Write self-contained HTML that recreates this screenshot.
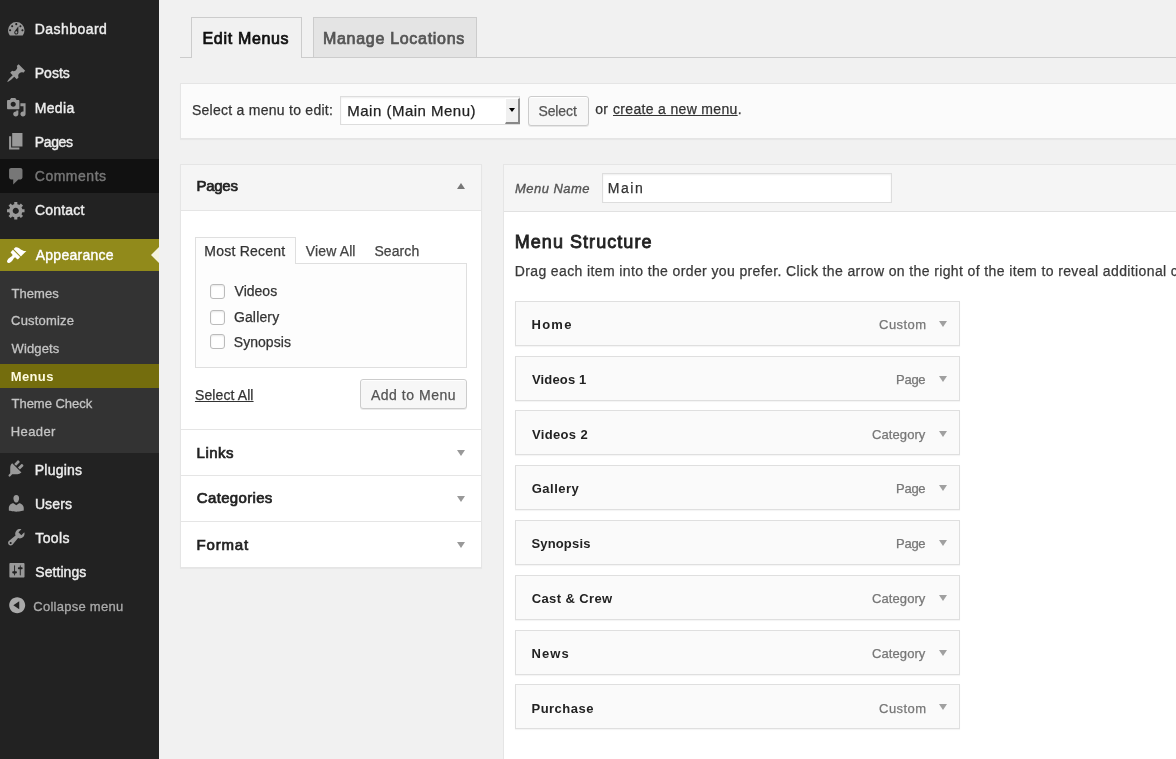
<!DOCTYPE html>
<html lang="en"><head><meta charset="utf-8"><title>Menus</title><style>
html,body{margin:0;padding:0}
body{width:1176px;height:759px;overflow:hidden;background:#f1f1f1;font-family:"Liberation Sans",sans-serif}
#w{position:absolute;left:0;top:0;width:1176px;height:759px;overflow:hidden;will-change:transform}
.b{position:absolute}
.t{position:absolute;white-space:nowrap;line-height:20px;height:20px;display:block}
svg.i{position:absolute;overflow:visible}
</style></head><body><div id="w">
<nav id="adminmenu">
<div class="b " style="left:0px;top:0px;width:159px;height:759px;background:#222"></div>
<div class="b " style="left:0px;top:159px;width:159px;height:34px;background:#111"></div>
<div class="b " style="left:0px;top:239px;width:159px;height:32px;background:#918a1b"></div>
<div class="b " style="left:0px;top:271px;width:159px;height:182px;background:#333"></div>
<div class="b " style="left:0px;top:364px;width:159px;height:24px;background:#746d0d"></div>
<div class="b" style="left:151px;top:247px;width:0;height:0;border-top:8px solid transparent;border-bottom:8px solid transparent;border-right:8px solid #f4f2e0"></div>
<span class="t" style="left:34.77px;top:19.0px;font-size:14px;color:#eee;letter-spacing:0.456px;-webkit-text-stroke:0.4px #eee;">Dashboard</span>
<span class="t" style="left:34.77px;top:63.0px;font-size:14px;color:#eee;letter-spacing:-0.001px;-webkit-text-stroke:0.4px #eee;">Posts</span>
<span class="t" style="left:34.77px;top:98.0px;font-size:14px;color:#eee;letter-spacing:0.318px;-webkit-text-stroke:0.4px #eee;">Media</span>
<span class="t" style="left:34.79px;top:132.0px;font-size:14px;color:#eee;letter-spacing:-0.381px;-webkit-text-stroke:0.4px #eee;">Pages</span>
<span class="t" style="left:34.79px;top:166.0px;font-size:14px;color:#777;letter-spacing:0.511px;-webkit-text-stroke:0.4px #777;">Comments</span>
<span class="t" style="left:34.99px;top:200.0px;font-size:14px;color:#eee;letter-spacing:0.202px;-webkit-text-stroke:0.4px #eee;">Contact</span>
<span class="t" style="left:35.68px;top:245.0px;font-size:14px;color:#fff;letter-spacing:0.268px;-webkit-text-stroke:0.4px #fff;">Appearance</span>
<span class="t" style="left:34.77px;top:460.0px;font-size:14px;color:#eee;letter-spacing:0.216px;-webkit-text-stroke:0.4px #eee;">Plugins</span>
<span class="t" style="left:34.89px;top:494.0px;font-size:14px;color:#eee;letter-spacing:0.132px;-webkit-text-stroke:0.4px #eee;">Users</span>
<span class="t" style="left:35.35px;top:528.0px;font-size:14px;color:#eee;letter-spacing:0.365px;-webkit-text-stroke:0.4px #eee;">Tools</span>
<span class="t" style="left:35.23px;top:562.0px;font-size:14px;color:#eee;letter-spacing:0.073px;-webkit-text-stroke:0.4px #eee;">Settings</span>
<span class="t" style="left:11.54px;top:283.5px;font-size:13px;color:#c4c4c4;letter-spacing:0.037px;-webkit-text-stroke:0.3px #c4c4c4;">Themes</span>
<span class="t" style="left:11.05px;top:310.5px;font-size:13px;color:#c4c4c4;letter-spacing:0.197px;-webkit-text-stroke:0.3px #c4c4c4;">Customize</span>
<span class="t" style="left:11.49px;top:338.5px;font-size:13px;color:#c4c4c4;letter-spacing:0.153px;-webkit-text-stroke:0.3px #c4c4c4;">Widgets</span>
<span class="t" style="left:11.54px;top:393.5px;font-size:13px;color:#c4c4c4;letter-spacing:-0.021px;-webkit-text-stroke:0.3px #c4c4c4;">Theme Check</span>
<span class="t" style="left:10.83px;top:421.5px;font-size:13px;color:#c4c4c4;letter-spacing:0.369px;-webkit-text-stroke:0.3px #c4c4c4;">Header</span>
<span class="t" style="left:10.72px;top:366.5px;font-size:13px;color:#fffce0;letter-spacing:0.373px;font-weight:bold;">Menus</span>
<span class="t" style="left:33.24px;top:596.5px;font-size:13px;color:#aaa;letter-spacing:0.271px;-webkit-text-stroke:0.3px #aaa;">Collapse menu</span>
<svg class="i" style="left:6.2px;top:18.8px" width="20.6" height="20.6" viewBox="0 0 20 20"><path fill="#999" fill-rule="evenodd" d="M3.76 16h12.48A8.01 8.01 0 0 0 18 11a8 8 0 0 0-16 0c0 1.89.65 3.63 1.76 5zM10 4c.55 0 1 .45 1 1s-.45 1-1 1-1-.45-1-1 .45-1 1-1zM6 6c.55 0 1 .45 1 1s-.45 1-1 1-1-.45-1-1 .45-1 1-1zm8 0c.55 0 1 .45 1 1s-.45 1-1 1-1-.45-1-1 .45-1 1-1zm-5.37 5.55L12 7v6c0 1.1-.9 2-2 2s-2-.9-2-2c0-.57.24-1.08.63-1.45zM4 10c.55 0 1 .45 1 1s-.45 1-1 1-1-.45-1-1 .45-1 1-1zm12 0c.55 0 1 .45 1 1s-.45 1-1 1-1-.45-1-1 .45-1 1-1zm-5 3c0-.55-.45-1-1-1s-1 .45-1 1 .45 1 1 1 1-.45 1-1z"/></svg>
<svg class="i" style="left:6.2px;top:62.8px" width="20.6" height="20.6" viewBox="0 0 20 20"><path fill="#999" fill-rule="evenodd" d="M10.44 3.02l1.82-1.82 6.36 6.35-1.83 1.82c-1.05-.68-2.48-.57-3.41.36l-.75.75c-.92.93-1.04 2.35-.35 3.41l-1.83 1.82-2.41-2.41-2.8 2.79c-.42.42-3.38 2.71-3.8 2.29s1.86-3.39 2.28-3.81l2.79-2.79L4.1 9.36l1.83-1.82c1.05.69 2.48.57 3.4-.36l.75-.75c.93-.92 1.05-2.35.36-3.41z"/></svg>
<svg class="i" style="left:6.2px;top:97.3px" width="20.6" height="20.6" viewBox="0 0 20 20"><path fill="#999" fill-rule="evenodd" d="M13 11V4c0-.55-.45-1-1-1h-1.67L9 1H5L3.67 3H2c-.55 0-1 .45-1 1v7c0 .55.45 1 1 1h10c.55 0 1-.45 1-1zM7 4.5c1.38 0 2.5 1.12 2.5 2.5S8.38 9.5 7 9.5 4.5 8.38 4.500 7 5.62 4.5 7 4.5zM14 6h5v10.5c0 1.38-1.12 2.5-2.5 2.5S14 17.88 14 16.5s1.12-2.5 2.5-2.5c.17 0 .34.02.5.05V9h-3V6zm-4 8.05V13h2v3.5c0 1.38-1.12 2.5-2.5 2.5S7 17.88 7 16.5 8.12 14 9.5 14c.17 0 .34.02.5.05z"/></svg>
<svg class="i" style="left:6.2px;top:131.3px" width="20.6" height="20.6" viewBox="0 0 20 20"><path fill="#999" fill-rule="evenodd" d="M6 15V2h10v13H6zm-1 1h8v2H3V5h2v11z"/></svg>
<svg class="i" style="left:6.2px;top:165.5px" width="20.6" height="20.6" viewBox="0 0 20 20"><path fill="#777" fill-rule="evenodd" d="M5 2h9c1.1 0 2 .9 2 2v7c0 1.1-.9 2-2 2h-2l-5 5v-5H5c-1.1 0-2-.9-2-2V4c0-1.1.9-2 2-2z"/></svg>
<svg class="i" style="left:6.2px;top:199.8px" width="20.6" height="20.6" viewBox="0 0 20 20"><path fill="#999" fill-rule="evenodd" d="M18 12h-2.18c-.17.7-.44 1.35-.81 1.930l1.54 1.54-2.1 2.1-1.54-1.54c-.58.36-1.23.63-1.91.79V19H8v-2.18c-.68-.16-1.33-.43-1.91-.79l-1.54 1.54-2.12-2.12 1.54-1.54c-.36-.58-.63-1.23-.79-1.91H1V9.030h2.17c.16-.7.44-1.35.8-1.940L2.43 5.550l2.1-2.1 1.54 1.54c.58-.37 1.24-.64 1.93-.81V2h3v2.180c.68.16 1.33.43 1.91.79l1.54-1.54 2.12 2.120-1.54 1.54c.36.59.64 1.24.8 1.940H18V12zm-8.5 1.5c1.66 0 3-1.34 3-3s-1.34-3-3-3-3 1.34-3 3 1.34 3 3 3z"/></svg>
<svg class="i" style="left:6.2px;top:244.5px" width="20.6" height="20.6" viewBox="0 0 20 20"><path fill="#fff" fill-rule="evenodd" d="M14.48 11.06L7.41 3.99l1.5-1.5c.5-.56 2.3-.47 3.510.32 1.21.8 1.43 1.280 2.910 2.1 1.18.64 2.45 1.26 4.450.85zm-.71.71L6.700 4.7 4.93 6.47c-.39.39-.39 1.02 0 1.410l1.06 1.06c.39.39.39 1.030 0 1.420-.6.6-1.43 1.110-2.21 1.690-.35.26-.7.53-1.010.84C1.430 14.230.4 16.080 1.4 17.070c.99 1 2.84-.03 4.180-1.360.31-.31.58-.66.85-1.020.57-.78 1.08-1.610 1.690-2.210.39-.39 1.020-.39 1.410 0l1.060 1.060c.39.39 1.020.39 1.410 0z"/></svg>
<svg class="i" style="left:6.2px;top:458.2px" width="20.6" height="20.6" viewBox="0 0 20 20"><path fill="#999" fill-rule="evenodd" d="M13.11 4.36L9.87 7.6 8 5.73l3.24-3.24c.35-.34 1.05-.2 1.56.32.52.51.66 1.21.31 1.55zM6 5L15 14L13.8 14.9C13 15.5 11.5 15.9 10 15.9H6L4.2 17.8C3.8 18.2 3.1 18.2 2.7 17.8C2.3 17.4 2.3 16.7 2.7 16.3L4.1 14.9V10C4.1 8.5 4.4 7 5.1 6.1zM16.7 7.95l-3.24 3.24-1.87-1.87 3.24-3.24c.35-.34 1.05-.2 1.56.32.52.51.66 1.21.31 1.55z"/></svg>
<svg class="i" style="left:6.2px;top:492.7px" width="20.6" height="20.6" viewBox="0 0 20 20"><path fill="#999" fill-rule="evenodd" d="M10 9.25c-2.27 0-2.73-3.44-2.73-3.44C7 4.020 7.820 2 9.970 2c2.160 0 2.980 2.020 2.710 3.810 0 0-.41 3.440-2.680 3.440zm0 2.570L12.720 10c2.390 0 4.520 2.330 4.520 4.530v2.490s-3.650 1.130-7.240 1.130c-3.650 0-7.240-1.130-7.240-1.130v-2.490c0-2.250 1.940-4.480 4.470-4.480z"/></svg>
<svg class="i" style="left:6.2px;top:526.7px" width="20.6" height="20.6" viewBox="0 0 20 20"><path fill="#999" fill-rule="evenodd" d="M16.68 9.77c-1.34 1.34-3.3 1.67-4.950.99l-5.410 6.520c-.99.99-2.590.99-3.580 0s-.99-2.590 0-3.570l6.520-5.420c-.68-1.650-.35-3.610.99-4.950 1.280-1.280 3.120-1.620 4.720-1.060l-2.890 2.890 2.820 2.820 2.860-2.870c.53 1.580.18 3.390-1.080 4.650zM3.810 16.210c.4.39 1.040.39 1.430 0 .4-.4.4-1.040 0-1.430-.39-.4-1.030-.4-1.430 0-.39.39-.39 1.030 0 1.430z"/></svg>
<svg class="i" style="left:6.2px;top:560.4px" width="20.6" height="20.6" viewBox="0 0 20 20"><path fill="#999" fill-rule="evenodd" transform="translate(18 0) scale(0.92 1) translate(-18 0)" d="M18 16V4c0-.55-.45-1-1-1H3c-.55 0-1 .45-1 1v12c0 .55.45 1 1 1h14c.55 0 1-.45 1-1zM8 11h1c.55 0 1 .45 1 1s-.45 1-1 1H8v1.500c0 .28-.22.5-.5.5s-.5-.22-.5-.5V13H6c-.55 0-1-.45-1-1s.45-1 1-1h1V5.500c0-.28.22-.5.5-.5s.5.22.5.5V11zm5-2h-1c-.55 0-1-.45-1-1s.45-1 1-1h1V5.500c0-.28.22-.5.5-.5s.5.22.5.5V7h1c.55 0 1 .45 1 1s-.45 1-1 1h-1v5.500c0 .28-.22.5-.5.5s-.5-.22-.5-.5V9z"/></svg>
<svg class="i" style="left:6.8px;top:594.7px" width="20.4" height="20.4" viewBox="0 0 20 20"><path fill="#aaa" fill-rule="evenodd" d="M10 2.160c4.33 0 7.840 3.510 7.840 7.840s-3.510 7.840-7.840 7.840S2.160 14.330 2.160 10 5.670 2.160 10 2.160zm2 11.720V6.120L6.180 9.970z"/></svg>
</nav><main id="content"><header id="tabs">
<div class="b " style="left:180px;top:57px;width:1000px;height:1px;background:#ccc"></div>
<div class="b " style="left:191px;top:17px;width:111px;height:41px;background:#f1f1f1;border:1px solid #ccc;border-bottom:none;box-sizing:border-box"></div>
<div class="b " style="left:313px;top:17px;width:164px;height:41px;background:#e4e4e4;border:1px solid #ccc;box-sizing:border-box"></div>
<span class="t" style="left:202.53px;top:28.5px;font-size:16px;color:#111;letter-spacing:0.672px;-webkit-text-stroke:0.74px #111;">Edit Menus</span>
<span class="t" style="left:322.97px;top:28.5px;font-size:16px;color:#555;letter-spacing:0.703px;-webkit-text-stroke:0.74px #555;">Manage Locations</span>
</header><section id="manage-menus">
<div class="b " style="left:180px;top:83px;width:1001px;height:56px;background:#fbfbfb;border:1px solid #e5e5e5;box-sizing:border-box;box-shadow:0 1px 1px rgba(0,0,0,.04)"></div>
<span class="t" style="left:191.96px;top:100.0px;font-size:14px;color:#333;letter-spacing:0.261px;-webkit-text-stroke:0.25px #333;">Select a menu to edit:</span>
<div class="b " style="left:340px;top:96px;width:180px;height:29px;background:#fff;border:1px solid #ddd;box-sizing:border-box;box-shadow:inset 0 1px 2px rgba(0,0,0,.07)"></div>
<span class="t" style="left:347.27px;top:100.5px;font-size:15px;color:#222;letter-spacing:0.493px;-webkit-text-stroke:0.25px #222;">Main (Main Menu)</span>
<div class="b " style="left:505px;top:98px;width:15px;height:26px;background:#f0f0f0;border-top:1px solid #fff;border-left:1px solid #fff;border-right:2px solid #888;border-bottom:2px solid #888;box-sizing:border-box"></div>
<div class="b" style="left:509px;top:108px;width:0;height:0;border-left:3.5px solid transparent;border-right:3.5px solid transparent;border-top:4px solid #000"></div>
<div class="b " style="left:528px;top:96px;width:61px;height:30px;background:#f7f7f7;border:1px solid #ccc;border-radius:3px;box-sizing:border-box;box-shadow:inset 0 1px 0 #fff,0 1px 0 rgba(0,0,0,.08)"></div>
<span class="t" style="left:538.41px;top:101.0px;font-size:14px;color:#555;letter-spacing:-0.110px;-webkit-text-stroke:0.25px #555;">Select</span>
<span class="t" style="left:595.25px;top:99.0px;font-size:14px;color:#333;-webkit-text-stroke:0.25px #333;letter-spacing:0.3px;">or</span>
<span class="t" style="left:613.00px;top:99.0px;font-size:14px;color:#333;letter-spacing:0.328px;-webkit-text-stroke:0.25px #333;"><span style="text-decoration:underline">create a new menu</span>.</span>
</section><section id="menu-settings-column">
<div class="b " style="left:180px;top:164px;width:302px;height:404px;background:#fff;border:1px solid #e5e5e5;box-sizing:border-box;box-shadow:0 1px 1px rgba(0,0,0,.04)"></div>
<div class="b " style="left:181px;top:165px;width:300px;height:45px;background:#f5f5f5"></div>
<div class="b " style="left:181px;top:210px;width:300px;height:1px;background:#e5e5e5"></div>
<div class="b " style="left:181px;top:429px;width:300px;height:1px;background:#e5e5e5"></div>
<div class="b " style="left:181px;top:475px;width:300px;height:1px;background:#e5e5e5"></div>
<div class="b " style="left:181px;top:521px;width:300px;height:1px;background:#e5e5e5"></div>
<span class="t" style="left:196.54px;top:175.5px;font-size:15px;color:#222;letter-spacing:-0.291px;-webkit-text-stroke:0.69px #222;">Pages</span>
<span class="t" style="left:196.54px;top:442.5px;font-size:15px;color:#222;letter-spacing:0.510px;-webkit-text-stroke:0.69px #222;">Links</span>
<span class="t" style="left:196.86px;top:487.5px;font-size:15px;color:#222;letter-spacing:0.326px;-webkit-text-stroke:0.69px #222;">Categories</span>
<span class="t" style="left:196.54px;top:534.5px;font-size:15px;color:#222;letter-spacing:0.828px;-webkit-text-stroke:0.69px #222;">Format</span>
<div class="b" style="left:456.5px;top:182.5px;width:0;height:0;border-left:4.0px solid transparent;border-right:4.0px solid transparent;border-bottom:6px solid #777"></div>
<div class="b" style="left:456.5px;top:450px;width:0;height:0;border-left:4.0px solid transparent;border-right:4.0px solid transparent;border-top:6.5px solid #999"></div>
<div class="b" style="left:456.5px;top:496px;width:0;height:0;border-left:4.0px solid transparent;border-right:4.0px solid transparent;border-top:6.5px solid #999"></div>
<div class="b" style="left:456.5px;top:542px;width:0;height:0;border-left:4.0px solid transparent;border-right:4.0px solid transparent;border-top:6.5px solid #999"></div>
<div class="b " style="left:195px;top:263px;width:272px;height:105px;background:#fdfdfd;border:1px solid #dfdfdf;box-sizing:border-box"></div>
<div class="b " style="left:195px;top:237px;width:101px;height:27px;background:#fdfdfd;border:1px solid #dfdfdf;border-bottom:none;box-sizing:border-box"></div>
<span class="t" style="left:204.31px;top:241.0px;font-size:14px;color:#333;letter-spacing:0.236px;-webkit-text-stroke:0.25px #333;">Most Recent</span>
<span class="t" style="left:305.83px;top:241.0px;font-size:14px;color:#444;letter-spacing:0.125px;-webkit-text-stroke:0.25px #444;">View All</span>
<span class="t" style="left:374.41px;top:241.0px;font-size:14px;color:#444;letter-spacing:0.097px;-webkit-text-stroke:0.25px #444;">Search</span>
<div class="b " style="left:210px;top:284px;width:15px;height:15px;background:#fff;border:1px solid #bbb;border-radius:3px;box-sizing:border-box;box-shadow:inset 0 1px 2px rgba(0,0,0,.1)"></div>
<span class="t" style="left:234.54px;top:281.0px;font-size:14px;color:#333;letter-spacing:0.013px;-webkit-text-stroke:0.25px #333;">Videos</span>
<div class="b " style="left:210px;top:310px;width:15px;height:15px;background:#fff;border:1px solid #bbb;border-radius:3px;box-sizing:border-box;box-shadow:inset 0 1px 2px rgba(0,0,0,.1)"></div>
<span class="t" style="left:233.89px;top:307.0px;font-size:14px;color:#333;letter-spacing:0.157px;-webkit-text-stroke:0.25px #333;">Gallery</span>
<div class="b " style="left:210px;top:334px;width:15px;height:15px;background:#fff;border:1px solid #bbb;border-radius:3px;box-sizing:border-box;box-shadow:inset 0 1px 2px rgba(0,0,0,.1)"></div>
<span class="t" style="left:233.75px;top:332.0px;font-size:14px;color:#333;letter-spacing:0.051px;-webkit-text-stroke:0.25px #333;">Synopsis</span>
<span class="t" style="left:194.96px;top:385.0px;font-size:14px;color:#333;letter-spacing:0.103px;-webkit-text-stroke:0.25px #333;text-decoration:underline;">Select All</span>
<div class="b " style="left:360px;top:379px;width:107px;height:30px;background:#f7f7f7;border:1px solid #ccc;border-radius:3px;box-sizing:border-box;box-shadow:inset 0 1px 0 #fff,0 1px 0 rgba(0,0,0,.08)"></div>
<span class="t" style="left:370.92px;top:385.0px;font-size:14px;color:#555;letter-spacing:0.527px;-webkit-text-stroke:0.25px #555;">Add to Menu</span>
</section><section id="menu-management">
<div class="b " style="left:503px;top:164px;width:700px;height:620px;background:#fff;border:1px solid #e5e5e5;box-sizing:border-box"></div>
<div class="b " style="left:504px;top:165px;width:700px;height:46px;background:#f5f5f5"></div>
<div class="b " style="left:504px;top:211px;width:700px;height:1px;background:#e1e1e1"></div>
<span class="t" style="left:515.08px;top:178.5px;font-size:13px;color:#555;letter-spacing:0.447px;font-style:italic;-webkit-text-stroke:0.35px #555;">Menu Name</span>
<div class="b " style="left:602px;top:173px;width:290px;height:30px;background:#fff;border:1px solid #ddd;box-sizing:border-box;box-shadow:inset 0 1px 2px rgba(0,0,0,.07)"></div>
<span class="t" style="left:607.72px;top:178.0px;font-size:14px;color:#333;letter-spacing:1.591px;-webkit-text-stroke:0.25px #333;">Main</span>
<span class="t" style="left:514.74px;top:232.0px;font-size:18px;color:#222;letter-spacing:1.050px;-webkit-text-stroke:0.83px #222;">Menu Structure</span>
<span class="t" style="left:514.72px;top:261.0px;font-size:14px;color:#3a3a3a;letter-spacing:0.383px;-webkit-text-stroke:0.25px #3a3a3a;">Drag each item into the order you prefer. Click the arrow on the right of the item to reveal additional configuration options.</span>
<div class="b " style="left:515px;top:301px;width:445px;height:45px;background:#fafafa;border:1px solid #dfdfdf;box-sizing:border-box;box-shadow:0 1px 1px rgba(0,0,0,.04)"></div>
<span class="t" style="left:531.53px;top:314.5px;font-size:13px;color:#222;letter-spacing:1.258px;font-weight:bold;">Home</span>
<span class="t" style="left:879.07px;top:314.5px;font-size:13px;color:#777;letter-spacing:0.454px;-webkit-text-stroke:0.25px #777;">Custom</span>
<div class="b" style="left:939px;top:321px;width:0;height:0;border-left:4.5px solid transparent;border-right:4.5px solid transparent;border-top:6.5px solid #a0a0a0"></div>
<div class="b " style="left:515px;top:356px;width:445px;height:45px;background:#fafafa;border:1px solid #dfdfdf;box-sizing:border-box;box-shadow:0 1px 1px rgba(0,0,0,.04)"></div>
<span class="t" style="left:531.92px;top:369.5px;font-size:13px;color:#222;letter-spacing:0.170px;font-weight:bold;">Videos 1</span>
<span class="t" style="left:896.11px;top:369.5px;font-size:13px;color:#777;letter-spacing:-0.292px;-webkit-text-stroke:0.25px #777;">Page</span>
<div class="b" style="left:939px;top:376px;width:0;height:0;border-left:4.5px solid transparent;border-right:4.5px solid transparent;border-top:6.5px solid #a0a0a0"></div>
<div class="b " style="left:515px;top:410px;width:445px;height:45px;background:#fafafa;border:1px solid #dfdfdf;box-sizing:border-box;box-shadow:0 1px 1px rgba(0,0,0,.04)"></div>
<span class="t" style="left:531.92px;top:424.5px;font-size:13px;color:#222;letter-spacing:0.358px;font-weight:bold;">Videos 2</span>
<span class="t" style="left:872.05px;top:424.5px;font-size:13px;color:#777;letter-spacing:0.079px;-webkit-text-stroke:0.25px #777;">Category</span>
<div class="b" style="left:939px;top:431px;width:0;height:0;border-left:4.5px solid transparent;border-right:4.5px solid transparent;border-top:6.5px solid #a0a0a0"></div>
<div class="b " style="left:515px;top:465px;width:445px;height:45px;background:#fafafa;border:1px solid #dfdfdf;box-sizing:border-box;box-shadow:0 1px 1px rgba(0,0,0,.04)"></div>
<span class="t" style="left:531.71px;top:478.5px;font-size:13px;color:#222;letter-spacing:0.503px;font-weight:bold;">Gallery</span>
<span class="t" style="left:896.11px;top:478.5px;font-size:13px;color:#777;letter-spacing:-0.292px;-webkit-text-stroke:0.25px #777;">Page</span>
<div class="b" style="left:939px;top:485px;width:0;height:0;border-left:4.5px solid transparent;border-right:4.5px solid transparent;border-top:6.5px solid #a0a0a0"></div>
<div class="b " style="left:515px;top:520px;width:445px;height:45px;background:#fafafa;border:1px solid #dfdfdf;box-sizing:border-box;box-shadow:0 1px 1px rgba(0,0,0,.04)"></div>
<span class="t" style="left:531.43px;top:533.5px;font-size:13px;color:#222;letter-spacing:0.167px;font-weight:bold;">Synopsis</span>
<span class="t" style="left:896.11px;top:533.5px;font-size:13px;color:#777;letter-spacing:-0.292px;-webkit-text-stroke:0.25px #777;">Page</span>
<div class="b" style="left:939px;top:540px;width:0;height:0;border-left:4.5px solid transparent;border-right:4.5px solid transparent;border-top:6.5px solid #a0a0a0"></div>
<div class="b " style="left:515px;top:575px;width:445px;height:45px;background:#fafafa;border:1px solid #dfdfdf;box-sizing:border-box;box-shadow:0 1px 1px rgba(0,0,0,.04)"></div>
<span class="t" style="left:531.71px;top:588.5px;font-size:13px;color:#222;letter-spacing:0.391px;font-weight:bold;">Cast &amp; Crew</span>
<span class="t" style="left:872.05px;top:588.5px;font-size:13px;color:#777;letter-spacing:0.079px;-webkit-text-stroke:0.25px #777;">Category</span>
<div class="b" style="left:939px;top:595px;width:0;height:0;border-left:4.5px solid transparent;border-right:4.5px solid transparent;border-top:6.5px solid #a0a0a0"></div>
<div class="b " style="left:515px;top:630px;width:445px;height:45px;background:#fafafa;border:1px solid #dfdfdf;box-sizing:border-box;box-shadow:0 1px 1px rgba(0,0,0,.04)"></div>
<span class="t" style="left:531.53px;top:643.5px;font-size:13px;color:#222;letter-spacing:1.060px;font-weight:bold;">News</span>
<span class="t" style="left:872.05px;top:643.5px;font-size:13px;color:#777;letter-spacing:0.079px;-webkit-text-stroke:0.25px #777;">Category</span>
<div class="b" style="left:939px;top:650px;width:0;height:0;border-left:4.5px solid transparent;border-right:4.5px solid transparent;border-top:6.5px solid #a0a0a0"></div>
<div class="b " style="left:515px;top:684px;width:445px;height:45px;background:#fafafa;border:1px solid #dfdfdf;box-sizing:border-box;box-shadow:0 1px 1px rgba(0,0,0,.04)"></div>
<span class="t" style="left:531.53px;top:698.5px;font-size:13px;color:#222;letter-spacing:0.475px;font-weight:bold;">Purchase</span>
<span class="t" style="left:879.07px;top:698.5px;font-size:13px;color:#777;letter-spacing:0.454px;-webkit-text-stroke:0.25px #777;">Custom</span>
<div class="b" style="left:939px;top:704px;width:0;height:0;border-left:4.5px solid transparent;border-right:4.5px solid transparent;border-top:6.5px solid #a0a0a0"></div>
</section></main>
</div></body></html>
